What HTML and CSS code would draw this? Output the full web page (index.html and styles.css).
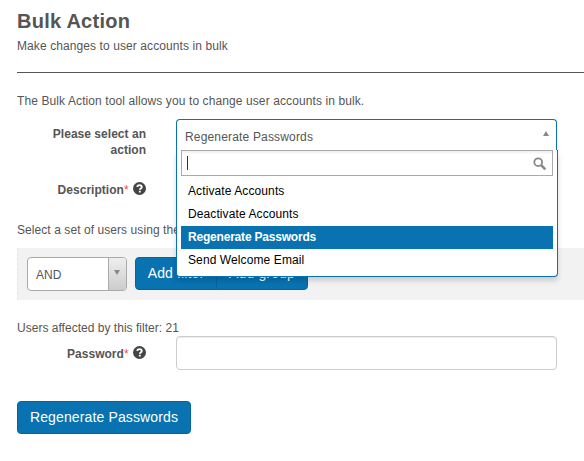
FILE: index.html
```html
<!DOCTYPE html>
<html lang="en">
<head>
<meta charset="utf-8">
<title>Bulk Action</title>
<link rel="stylesheet" href="styles.css">
</head>
<body>
<main class="page">
  <header class="page-header">
    <h1>Bulk Action</h1>
    <p class="subtitle">Make changes to user accounts in bulk</p>
  </header>
  <p class="intro">The Bulk Action tool allows you to change user accounts in bulk.</p>
  <div class="row row-action">
    <div class="label">Please select an action</div>
    <div class="select">
      <div class="select-value"><span>Regenerate Passwords</span><i class="arrow arrow-up"></i></div>
      <div class="dropdown">
        <div class="search">
          <span class="caret"></span>
          <svg class="search-icon" viewBox="0 0 14 14"><circle cx="5.2" cy="5.2" r="3.9"/><path d="M8.2 8.2l4.1 4.1"/></svg>
        </div>
        <ul class="options">
          <li>Activate Accounts</li>
          <li>Deactivate Accounts</li>
          <li class="active">Regenerate Passwords</li>
          <li>Send Welcome Email</li>
        </ul>
      </div>
    </div>
  </div>
  <div class="row row-description">
    <div class="label">Description<span class="required">*</span>
      <svg class="help" viewBox="0 0 12 12"><circle cx="6" cy="6" r="6"/><path d="M4 4.7C4 3.4 4.9 2.9 6 2.9s2.1.7 2.1 1.7C8.1 5.9 6.3 5.9 6.3 7.2M6.3 8.1v1.6"/></svg>
    </div>
  </div>
  <p class="filter-text">Select a set of users using the</p>
  <div class="filter-bar">
    <div class="operator"><span>AND</span><div class="operator-arrow"><i class="arrow arrow-down"></i></div></div>
    <div class="button-group"><button type="button">Add filter</button><button type="button">Add group</button></div>
  </div>
  <p class="affected">Users affected by this filter: 21</p>
  <div class="row row-password">
    <div class="label">Password<span class="required">*</span>
      <svg class="help" viewBox="0 0 12 12"><circle cx="6" cy="6" r="6"/><path d="M4 4.7C4 3.4 4.9 2.9 6 2.9s2.1.7 2.1 1.7C8.1 5.9 6.3 5.9 6.3 7.2M6.3 8.1v1.6"/></svg>
    </div>
    <input class="password" type="text">
  </div>
  <button class="submit" type="button">Regenerate Passwords</button>
</main>
</body>
</html>
```
FILE: styles.css
```css
* { box-sizing: border-box; }
body {
  margin: 0;
  background: #fff;
  color: #555;
  font: 12px/16px "Liberation Sans", Arial, sans-serif;
  letter-spacing: 0.1px;
  overflow: hidden;
}
h1, p, ul { margin: 0; padding: 0; }
.page { padding: 9px 0 0 17px; }
.page-header { height: 64px; border-bottom: 1px solid #555; }
h1 { font-size: 20px; line-height: 24px; letter-spacing: 0.25px; }
.subtitle { margin-top: 5px; letter-spacing: 0.09px; }
.intro { margin-top: 20px; }
.row { display: flex; }
.label {
  width: 129px;
  padding-left: 20px;
  margin-right: 30px;
  font-weight: bold;
  letter-spacing: 0.03px;
  text-align: right;
  flex: none;
}
.row-action { height: 63px; margin-top: 10px; }
.row-action .label { padding-top: 7px; }
.required { color: #f44; font-weight: normal; }
.help { width: 13px; height: 13px; margin-left: 1px; vertical-align: -1px; }
.help circle { fill: #444; }
.help path { fill: none; stroke: #fff; stroke-width: 1.7; }
.select { position: relative; width: 381px; height: 31px; }
.select-value {
  display: flex;
  justify-content: space-between;
  height: 31px;
  padding: 9px 7px 0 8px;
  border: 1px solid #0873b0;
  border-bottom: 0;
  border-radius: 4px 4px 0 0;
  letter-spacing: 0.17px;
}
.arrow { display: block; width: 0; height: 0; border: 3px solid transparent; }
.arrow-up { margin-top: 2px; border-top: 0; border-bottom: 5px solid #888; }
.arrow-down { border-bottom: 0; border-top: 5px solid #888; }
.dropdown {
  position: absolute;
  z-index: 1;
  top: 31px;
  left: 0;
  width: 382px;
  height: 127px;
  padding: 0 4px;
  background: #fff;
  border: 1px solid #0873b0;
  border-top: 0;
  border-radius: 0 0 4px 4px;
  box-shadow: 0 4px 5px rgba(0, 0, 0, 0.15);
}
.search {
  display: flex;
  justify-content: space-between;
  height: 26px;
  padding: 5px 5px 0 5px;
  border: 1px solid #aaa;
  background: linear-gradient(#eee, #fff 15%);
}
.caret { width: 1px; height: 14px; background: #333; }
.search-icon { width: 14px; height: 14px; margin-top: 1px; }
.search-icon circle { fill: none; stroke: #888; stroke-width: 1.8; }
.search-icon path { stroke: #888; stroke-width: 2.5; }
.options { padding-top: 4px; list-style: none; color: #000; }
.options li { height: 23px; padding: 3px 7px 0; }
.options .active { color: #fff; background: #0873b0; font-weight: bold; letter-spacing: -0.2px; }
.row-description { height: 29px; }
.filter-text { margin-top: 11px; white-space: nowrap; letter-spacing: 0.07px; }
.filter-bar {
  display: flex;
  gap: 8px;
  height: 52px;
  margin-top: 10px;
  padding: 9px;
  background: #f2f2f2;
  border-left: 1px dashed #e4e4e4;
}
.operator {
  display: flex;
  justify-content: space-between;
  width: 100px;
  height: 34px;
  border: 1px solid #aaa;
  border-radius: 4px;
  background: #fff;
  overflow: hidden;
}
.operator > span { padding: 9px 0 0 8px; }
.operator-arrow {
  width: 18px;
  padding: 12px 0 0 5px;
  border-left: 1px solid #aaa;
  background: linear-gradient(#eee, #ccc);
}
.button-group { display: flex; }
button {
  height: 33px;
  padding: 0 0 1px;
  border: 1px solid #06659b;
  background: #0873b0;
  color: #fff;
  font: 14px/18px "Liberation Sans", Arial, sans-serif;
  letter-spacing: 0.13px;
  white-space: nowrap;
}
.button-group button:first-child { width: 82px; border-radius: 4px 0 0 4px; }
.button-group button:last-child { width: 92px; margin-left: -1px; border-radius: 0 4px 4px 0; }
.affected { margin-top: 20px; letter-spacing: 0.02px; }
.row-password { height: 34px; }
.row-password .label { padding-top: 10px; }
.password { width: 381px; height: 34px; border: 1px solid #ccc; border-radius: 4px; box-shadow: inset 0 1px 1px rgba(0, 0, 0, 0.075); }
.submit { display: block; width: 174px; margin-top: 31px; border-radius: 4px; }
```
